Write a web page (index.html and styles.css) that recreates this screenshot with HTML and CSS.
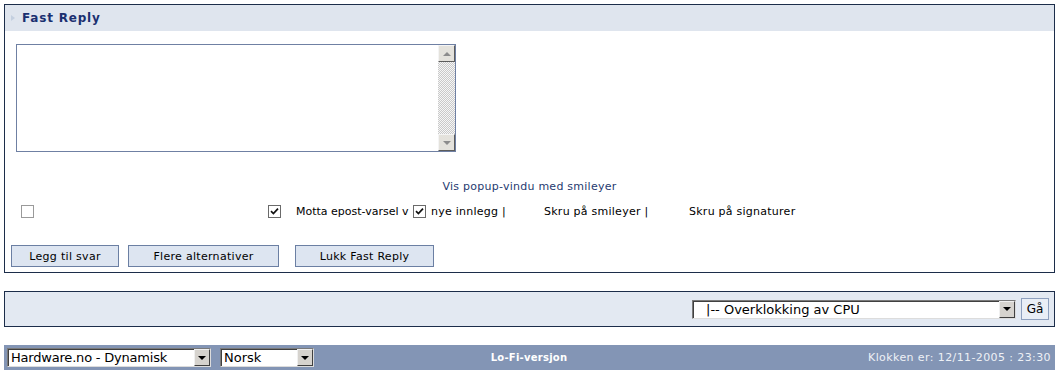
FILE: index.html
```html
<!DOCTYPE html>
<html lang="no">
<head>
  <meta charset="UTF-8">
  <title>Fast Reply</title>
  <link rel="stylesheet" href="styles.css">
</head>
<body>
  <div class="box">
    <div class="box-title"><span class="bullet"></span>Fast Reply</div>
    <div class="box-body">
      <div class="editor">
        <textarea class="editor-input"></textarea>
        <div class="vscroll">
          <span class="sb-btn sb-up"></span>
          <span class="sb-track"></span>
          <span class="sb-btn sb-down"></span>
        </div>
      </div>

      <p class="popup-link"><a href="#">Vis popup-vindu med smileyer</a></p>

      <div class="opts">
        <div class="opt-blank"><span class="check"></span></div>
        <div class="opt-mail">
          <span class="check checked"><svg width="9" height="9" viewBox="0 0 9 9"><path d="M1 4.2 L3.4 6.6 L8 1.6" fill="none" stroke="#111" stroke-width="1.7"/></svg></span>
          <span class="opt-clip">Motta epost-varsel v</span>
          <span class="check checked"><svg width="9" height="9" viewBox="0 0 9 9"><path d="M1 4.2 L3.4 6.6 L8 1.6" fill="none" stroke="#111" stroke-width="1.7"/></svg></span>
          <span class="opt-after">nye innlegg |</span>
        </div>
        <div class="opt-smile">Skru på smileyer |</div>
        <div>Skru på signaturer</div>
      </div>

      <div class="actions">
        <button class="btn btn-submit">Legg til svar</button>
        <button class="btn btn-more">Flere alternativer</button>
        <button class="btn btn-close">Lukk Fast Reply</button>
      </div>
    </div>
  </div>

  <div class="jump">
    <div class="combo combo-forum"><span class="combo-text">|-- Overklokking av CPU</span><span class="combo-btn"></span></div>
    <button class="go-btn">Gå</button>
  </div>

  <div class="footer">
    <div class="footer-left">
      <div class="combo combo-skin"><span class="combo-text">Hardware.no - Dynamisk</span><span class="combo-btn"></span></div>
      <div class="combo combo-lang"><span class="combo-text">Norsk</span><span class="combo-btn"></span></div>
    </div>
    <a class="lofi" href="#">Lo-Fi-versjon</a>
    <div class="clock">Klokken er: 12/11-2005 : 23:30</div>
  </div>
</body>
</html>
```

FILE: styles.css
```css
body {
  margin: 0;
  padding: 4px 2px 0 4px;
  font: 11px "DejaVu Sans", Verdana, sans-serif;
  letter-spacing: 0.25px;
  color: #000;
  background: #fff;
}
.box {
  border: 1px solid #1c2d4a;
}
.box-title {
  height: 26px;
  display: flex;
  align-items: center;
  padding-left: 6px;
  background: #dfe5ee;
  color: #1a3070;
  font-size: 12px;
  font-weight: bold;
  letter-spacing: 0.8px;
}
.bullet {
  width: 0;
  height: 0;
  border-left: 4px solid #c4d0e0;
  border-top: 3px solid transparent;
  border-bottom: 3px solid transparent;
  margin-right: 7px;
}
.box-body {
  padding: 13px 0 5px 0;
}
.editor {
  display: flex;
  box-sizing: border-box;
  width: 440px;
  height: 108px;
  margin-left: 11px;
  border: 1px solid #6f80a3;
  background: #fff;
}
.editor-input {
  flex: 1;
  border: 0;
  outline: none;
  resize: none;
  padding: 2px;
  font: inherit;
}
.vscroll {
  width: 17px;
  display: flex;
  flex-direction: column;
}
.sb-btn {
  box-sizing: border-box;
  height: 17px;
  background: #e4e2dc;
  border: 1px solid;
  border-color: #f4f4f4 #5c5c5c #5c5c5c #f4f4f4;
  display: flex;
  align-items: center;
  justify-content: center;
}
.sb-btn::before {
  content: "";
  width: 0;
  height: 0;
  border-left: 4px solid transparent;
  border-right: 4px solid transparent;
}
.sb-up::before {
  border-bottom: 4px solid #8c8c8c;
}
.sb-down::before {
  border-top: 4px solid #8c8c8c;
}
.sb-track {
  flex: 1;
  background: repeating-conic-gradient(#c9c9c9 0 25%, #f6f6f6 0 50%) 0 0 / 2px 2px;
}
.popup-link {
  margin: 28px 0 0;
  line-height: 13px;
  text-align: center;
}
.popup-link a {
  color: #1f3b70;
  text-decoration: none;
}
.opts {
  display: flex;
  align-items: center;
  height: 16px;
  margin-top: 10px;
  padding-left: 16px;
  white-space: nowrap;
}
.check {
  display: inline-flex;
  align-items: center;
  justify-content: center;
  box-sizing: border-box;
  width: 13px;
  height: 13px;
  border: 1px solid #9a9a9a;
  background: #fff;
}
.check.checked {
  border-color: #6a6a6a;
}
.opt-blank {
  width: 247px;
  display: flex;
}
.opt-mail {
  width: 276px;
  display: flex;
  align-items: center;
}
.opt-clip {
  width: 113px;
  margin: 0 4px 0 15px;
  letter-spacing: 0;
}
.opt-after {
  margin-left: 5px;
}
.opt-smile {
  width: 145px;
}
.actions {
  display: flex;
  margin-top: 26px;
  padding-left: 6px;
}
.btn {
  height: 22px;
  padding: 0;
  border: 1px solid #6b7fa3;
  background: #dde5f1;
  color: #000;
  font: inherit;
  letter-spacing: 0.3px;
}
.btn-submit {
  width: 108px;
}
.btn-more {
  width: 151px;
  margin-left: 9px;
}
.btn-close {
  width: 139px;
  margin-left: 16px;
}
.jump {
  box-sizing: border-box;
  height: 36px;
  margin-top: 18px;
  display: flex;
  align-items: center;
  justify-content: flex-end;
  padding-right: 5px;
  border: 1px solid #1c2d4a;
  background: #e3e9f2;
}
.combo {
  display: flex;
  box-sizing: border-box;
  height: 19px;
  border: 1px solid;
  border-color: #7a7a7a #dcdcdc #dcdcdc #7a7a7a;
  background: #fff;
  color: #000;
  font-size: 13px;
  letter-spacing: 0;
  line-height: 17px;
}
.combo-text {
  flex: 1;
  padding-left: 2px;
  overflow: hidden;
  white-space: nowrap;
  border-top: 1px solid #404040;
  border-left: 1px solid #404040;
  line-height: 16px;
}
.combo-btn {
  width: 16px;
  box-sizing: border-box;
  background: #d6d3ce;
  border: 1px solid;
  border-color: #f0f0f0 #404040 #404040 #f0f0f0;
  display: flex;
  align-items: center;
  justify-content: center;
}
.combo-btn::before {
  content: "";
  width: 0;
  height: 0;
  border-left: 4px solid transparent;
  border-right: 4px solid transparent;
  border-top: 4px solid #000;
}
.combo-forum {
  width: 324px;
}
.combo-forum .combo-text {
  padding-left: 12px;
}
.combo-skin .combo-text {
  letter-spacing: -0.2px;
}
.go-btn {
  width: 28px;
  height: 22px;
  margin-left: 5px;
  padding: 0;
  border: 1px solid #8ea0bf;
  background: #e9eef6;
  font: 12px "DejaVu Sans", Verdana, sans-serif;
  color: #000;
}
.footer {
  height: 25px;
  margin-top: 18px;
  padding: 0 4px 0 3px;
  display: grid;
  grid-template-columns: 1fr auto 1fr;
  align-items: center;
  background: #8395b5;
  color: #fff;
}
.footer-left {
  display: flex;
}
.combo-skin {
  width: 204px;
}
.combo-lang {
  width: 94px;
  margin-left: 9px;
}
.lofi {
  color: #fff;
  font-size: 10px;
  font-weight: bold;
  text-decoration: none;
}
.clock {
  justify-self: end;
  color: #eef1f6;
  letter-spacing: 0.4px;
}
```
